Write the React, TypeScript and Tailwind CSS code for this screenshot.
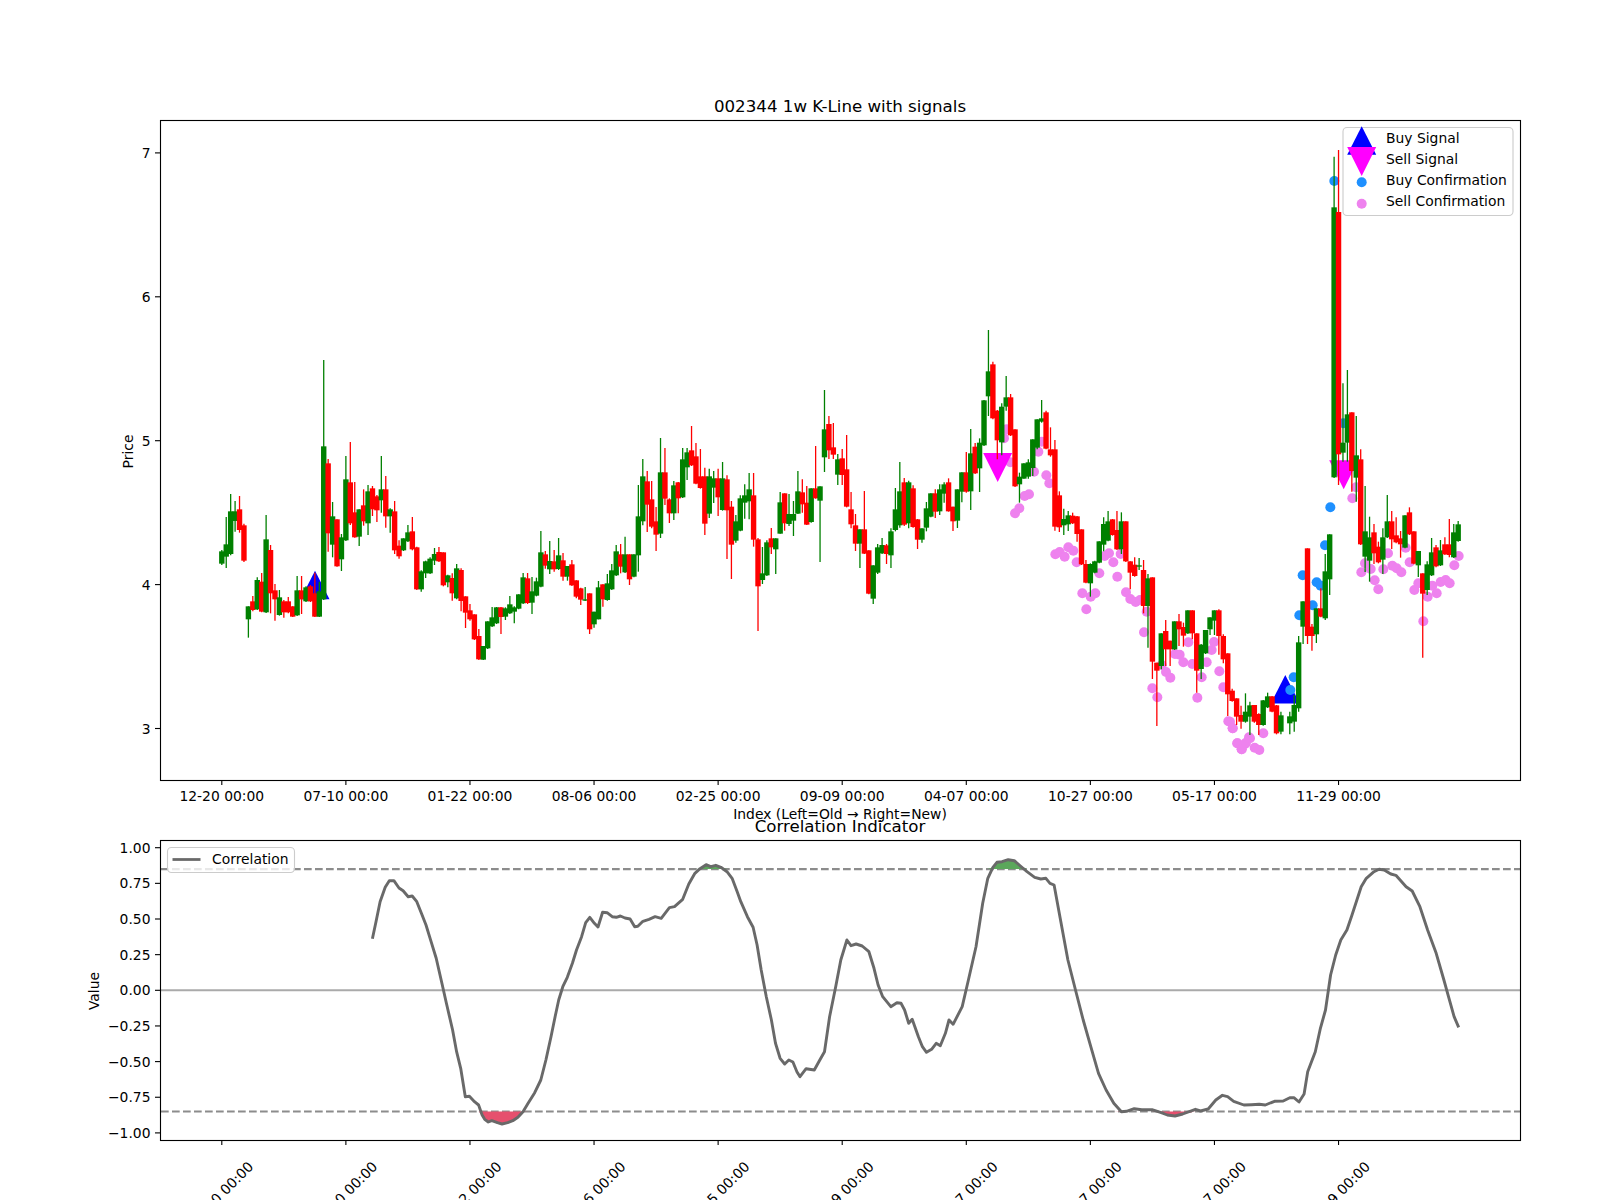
import React from 'react';

// candles: colour letter, then wick high, body top, body bottom, wick low
// y values are in thirds of a pixel from y=350 (read off the chart)
const rows = `g600 604 641 645,g501 583 620 654,g432 484 612 616,g453 484 513 545,r438 478 540 548,r521 526 632 636,
g769 769 808 863,r738 754 780 784,g682 690 778 780,r669 695 785 787,g495 568 787 789,r585 600 730 790,r702 721 748 812,g720 742 795 797,
r750 754 787 803,r741 754 787 790,r769 769 800 801,g678 721 796 798,r678 721 748 792,g709 712 754 756,r705 709 754 756,r668 730 800 801,
g695 724 800 801,g30 289 748 750,r327 340 550 605,g456 499 584 622,r508 508 649 650,g552 562 628 663,g318 388 571 573,r276 397 520 525,
r396 487 562 563,g478 478 560 588,r418 466 514 527,g405 424 520 555,r408 415 478 498,r435 439 481 516,g318 418 451 488,r378 418 499 533,
g475 478 499 548,r453 484 601 612,r571 587 619 626,g565 565 601 603,g525 547 574 576,r501 544 598 601,r590 592 718 720,g661 664 718 725,
g632 634 670 684,g622 626 670 672,g594 612 632 645,r591 606 634 636,r607 607 706 709,g674 676 697 712,r670 684 730 752,g642 655 745 748,
r655 660 753 784,r739 739 788 834,r762 781 808 812,r793 793 868 870,r837 858 928 930,g888 888 929 930,g814 814 895 897,g771 802 829 831,
g771 772 820 822,r771 772 801 852,g772 775 800 810,g738 763 790 792,g769 772 785 820,g733 733 776 778,g669 682 760 762,r669 685 759 762,
g681 724 758 792,g683 694 737 739,g543 607 710 712,r603 613 647 656,g573 633 658 672,r600 634 658 665,g564 616 657 660,r609 631 680 692,
g648 648 680 692,r630 643 706 708,r691 691 740 745,r713 715 749 765,g711 748 752 753,r730 730 838 852,g785 785 823 833,g693 712 808 808,
r703 703 748 770,g672 700 750 752,g642 661 718 720,g585 604 676 678,r582 613 650 670,g560 613 667 669,r613 613 688 705,g613 613 680 682,
g405 499 616 665,g327 379 514 526,r363 394 464 546,r393 448 530 535,r471 514 554 603,g264 367 551 564,r294 367 446 465,r445 448 490 519,
g393 406 490 510,r396 397 445 490,g294 328 442 444,g294 307 352 390,r228 301 346 348,r279 319 401 403,r297 379 414 416,r353 379 521 555,
g356 379 491 504,g363 385 413 459,r356 385 442 498,g336 385 480 482,r376 388 481 627,r453 470 584 687,g495 514 572 578,g436 445 542 544,
g403 436 458 506,g369 418 454 508,r369 436 569 590,r564 568 709 843,g591 670 690 702,g571 577 676 678,r534 565 592 612,g565 565 598 672,
g426 457 551 551,r430 430 520 542,g432 492 522 528,g453 492 512 558,g363 424 491 492,r388 427 463 488,r408 458 524 525,g415 415 516 518,
r288 415 445 446,g409 409 452 636,g120 238 322 366,r198 222 301 327,r219 292 314 327,g312 328 374 405,r297 325 375 405,r255 358 470 472,
r426 478 523 535,r492 526 581 603,g538 538 581 654,r423 538 611 612,r601 601 731 733,g646 646 746 762,g582 592 668 672,g564 585 610 612,
r582 586 612 642,g535 544 616 654,g414 478 540 544,g336 424 526 533,r384 397 524 528,g392 397 520 535,r406 415 531 533,r507 508 569 597,
g535 535 569 578,g456 475 533 544,g430 430 500 502,r418 430 485 504,g403 418 484 495,g397 403 431 458,r385 397 484 485,r470 470 514 543,
g418 418 512 534,g367 367 425 457,r306 367 425 428,g237 310 424 480,r279 290 370 372,g265 278 355 426,g150 151 286 288,g-60 64 139 198,
r35 43 205 208,r180 182 271 328,g160 170 277 316,g78 142 170 182,r132 142 256 258,r238 238 409 411,g368 380 403 458,g340 340 386 386,
g328 337 380 386,g268 268 354 378,g208 208 293 298,g150 205 215 218,r182 187 296 298,r232 298 316 320,r270 298 530 542,r424 436 532 546,
g476 507 526 555,g483 496 523 543,r488 497 520 522,r498 499 552 575,r538 538 643 645,r630 642 698 700,g640 642 700 740,g632 634 668 670,
g574 574 638 640,g502 522 584 604,g483 514 572 574,r507 508 555 557,r483 540 598 600,g487 514 598 612,r514 514 634 636,r634 634 668 718,
r622 644 678 680,g624 646 650 660,r630 660 768 790,g672 685 768 893,r682 682 935 987,r938 938 962 1128,g850 850 948 958,r810 843 898 948,
r872 872 898 948,g814 814 898 900,r792 814 838 888,r818 831 857 890,g781 781 850 852,r781 781 850 868,r850 850 962 1028,g882 884 957 987,
g840 840 910 912,g802 802 838 855,g781 781 812 855,r778 781 858 914,r853 858 928 940,r910 910 1033 1098,r1016 1022 1053 1055,
r1045 1045 1100 1125,r1067 1095 1115 1136,g1030 1085 1115 1118,g1055 1066 1100 1155,r1065 1065 1115 1118,r1090 1092 1125 1155,
g1050 1051 1125 1127,g1028 1039 1072 1074,r1038 1039 1085 1087,r1065 1066 1150 1153,g1085 1096 1145 1153,g1100 1100 1100 1100,
g1085 1099 1120 1153,g1035 1065 1115 1145,g858 877 1075 1085,g754 754 830 882,r595 595 858 882,r822 830 858 902,g775 775 853 879,
r715 775 800 802,g612 664 805 810,g553 553 688 735,g-580 -428 382 384,r-600 -414 313 405,g100 278 308 335,g60 193 278 335,r187 187 363 425,
g198 316 383 455,r298 328 583 585,g408 544 620 666,g500 562 632 695,r522 547 610 642,r575 590 637 640,g535 562 629 672,g435 514 562 564,
r483 514 568 597,r502 556 577 580,r543 565 583 623,g496 496 593 595,r472 487 553 555,r544 544 641 643,g603 603 646 681,r670 670 731 923,
g634 643 720 735,g564 607 676 678,r585 592 649 652,g570 601 646 648,r562 583 613 615,r507 583 615 622,g522 547 622 624,g513 523 573 575`;

const candles = rows.replace(/\s*\n\s*/g, '').split(',').map((r) => {
  const [hi, top, bot, lo] = r.slice(1).split(' ').map(Number);
  return { up: r[0] === 'g', hi: 350 + hi / 3, top: 350 + top / 3, bot: 350 + bot / 3, lo: 350 + lo / 3 };
});

const barX = (i: number) => 221.8 + i * 4.4315;

const tickXs = Array.from({ length: 10 }, (_, k) => barX(k * 28));
const tickDates = ['12-20 00:00', '07-10 00:00', '01-22 00:00', '08-06 00:00', '02-25 00:00', '09-09 00:00', '04-07 00:00', '10-27 00:00', '05-17 00:00', '11-29 00:00'];

const sellDots = [
  ...[[195, 490], [208, 475], [224, 438], [237, 433], [181, 337], [170, 238], [162, 265], [252, 365], [265, 305], [275, 275], [289, 376], [298, 400], [316, 613], [329, 606], [344, 620], [355, 592], [370, 602], [380, 637], [448, 670], [397, 730], [422, 740], [436, 730], [409, 778], [464, 618], [477, 610], [490, 637], [502, 680], [512, 612], [528, 727], [541, 747], [557, 756], [570, 750], [582, 847], [590, 785], [607, 1015], [622, 1042], [635, 945], [648, 966], [661, 983], [675, 912], [689, 914], [700, 937], [715, 877], [727, 942], [742, 1043], [755, 982], [770, 937], [785, 900], [792, 876], [808, 964], [820, 1012], [835, 1114], [848, 1135], [862, 1180], [875, 1198], [885, 1182], [897, 1162]].map(([x, y]) => [950 + x / 3, 350 + y / 3]),
  ...[[0, 965], [8, 985], [22, 1030], [35, 1048], [48, 1028], [60, 1015], [74, 1043], [88, 1050], [100, 1000], [367, 295], [378, 262], [394, 517], [405, 490], [422, 507], [434, 541], [445, 568], [460, 508], [474, 460], [487, 497], [500, 505], [514, 517], [527, 443], [539, 487], [553, 570], [565, 550], [580, 664], [593, 590], [607, 557], [620, 580], [632, 546], [647, 540], [659, 550], [673, 496], [686, 468]].map(([x, y]) => [1230 + x / 3, 400 + y / 3]),
];

const buyDots = [
  ...[[181, 870], [191, 832], [208, 646], [218, 526], [248, 616], [260, 547], [272, 557], [285, 436], [301, 322], [340, 70]].map(([x, y]) => [1230 + x / 3, 400 + y / 3]),
  [1334.3, 181],
];

const corrLeft = [[730, 446], [737, 395], [745, 335], [755, 292], [763, 272], [772, 272], [782, 294], [790, 302], [800, 320], [808, 318], [817, 335], [826, 370], [835, 405], [845, 455], [855, 505], [867, 585], [875, 640], [887, 720], [895, 785], [903, 835], [912, 920], [920, 919], [930, 935], [938, 945], [945, 975], [950, 988], [957, 996], [964, 992], [975, 998], [984, 1002], [995, 998], [1005, 992], [1015, 982], [1025, 965], [1035, 940], [1048, 908], [1060, 870], [1070, 810], [1080, 740], [1088, 680], [1095, 630], [1103, 590], [1112, 562], [1122, 520], [1130, 480], [1140, 440], [1148, 398], [1156, 382], [1165, 400], [1172, 411], [1181, 367], [1190, 368], [1200, 380], [1208, 382], [1216, 378], [1225, 384], [1235, 387], [1244, 410], [1250, 409], [1260, 394], [1272, 388], [1284, 380], [1296, 385], [1312, 353], [1322, 350], [1338, 328], [1350, 282], [1362, 250], [1372, 236], [1384, 224], [1393, 230], [1403, 226], [1413, 232], [1425, 245], [1435, 265], [1445, 305], [1452, 335], [1465, 380], [1476, 412], [1484, 465], [1492, 540], [1502, 620], [1512, 690], [1520, 760], [1529, 805], [1538, 822], [1546, 810], [1554, 816], [1562, 845]];
const corrRight = [[0, 860], [12, 836], [28, 840], [38, 812], [48, 785], [58, 680], [70, 590], [80, 510], [92, 450], [100, 467], [110, 462], [122, 468], [135, 485], [145, 535], [153, 585], [162, 620], [178, 650], [190, 638], [198, 640], [205, 660], [213, 700], [220, 688], [232, 740], [240, 770], [248, 787], [258, 778], [267, 760], [275, 767], [285, 730], [292, 690], [300, 703], [318, 650], [330, 570], [345, 470], [358, 340], [368, 265], [378, 232], [386, 217], [396, 215], [408, 209], [420, 212], [432, 228], [445, 245], [460, 262], [472, 267], [482, 265], [490, 280], [498, 285], [510, 385], [525, 510], [540, 600], [555, 690], [570, 770], [585, 850], [600, 900], [615, 940], [630, 965], [640, 964], [655, 956], [670, 959], [690, 959], [708, 968], [720, 975], [735, 978], [750, 972], [775, 958], [785, 963], [800, 957], [815, 930], [828, 916], [838, 920], [850, 934], [870, 945], [885, 944], [900, 943], [912, 945], [930, 934], [947, 933], [960, 923], [968, 923], [978, 936], [988, 912], [995, 845], [1010, 785], [1020, 715], [1030, 660], [1040, 555], [1050, 495], [1060, 450], [1072, 420], [1082, 375], [1100, 290], [1110, 265], [1125, 245], [1135, 238], [1145, 240], [1158, 252], [1168, 256], [1188, 290], [1200, 303], [1215, 350], [1230, 420], [1247, 490], [1262, 570], [1272, 625], [1282, 680], [1291, 712]];
const corr = [
  ...corrLeft.map(([x, y]) => [x / 1.96, 790 + y / 3]),
  ...corrRight.map(([x, y]) => [800 + x / 1.96, 790 + y / 3]),
];
const corrY = (v: number) => 990.3 - 142.6 * v;
const pts = (list: number[][]) => list.map(([x, y]) => `${x.toFixed(1)},${y.toFixed(1)}`).join(' ');

const Tri = ({ x, y, down, color }: { x: number; y: number; down?: boolean; color: string }) => (
  <polygon fill={color} points={down ? `${x - 14.5},${y} ${x + 14.5},${y} ${x},${y + 29}` : `${x - 14.5},${y} ${x + 14.5},${y} ${x},${y - 28.5}`} />
);

const Frame = ({ top, bottom }: { top: number; bottom: number }) => (
  <rect x={160.5} y={top + 0.5} width={1360} height={bottom - top} fill="none" stroke="#000" strokeWidth={1.11} />
);

const PriceChart = () => (
  <svg viewBox="0 100 1600 720" className="w-[1600px] h-[720px] overflow-visible shrink-0">
    <text x={840} y={112} textAnchor="middle" className="text-[16.67px]">002344 1w K-Line with signals</text>

    {sellDots.map(([x, y], i) => <circle key={i} cx={x} cy={y} r={5} fill="#ee82ee" />)}
    <Tri x={315} y={599.3} color="#0000ff" />
    <Tri x={1285.3} y={703.5} color="#0000ff" />
    <Tri x={997.7} y={453} down color="#ff00ff" />
    <Tri x={1343.7} y={460.3} down color="#ff00ff" />
    {buyDots.map(([x, y], i) => <circle key={i} cx={x} cy={y} r={5} fill="#1e90ff" />)}

    {candles.map((c, i) => {
      const color = c.up ? '#008000' : '#ff0000';
      const x = barX(i);
      return (
        <g key={i}>
          <line x1={x} x2={x} y1={c.hi} y2={c.lo} stroke={color} strokeWidth={1.3} />
          <rect x={x - 2.7} y={c.top} width={5.4} height={c.bot - c.top} fill={color} />
        </g>
      );
    })}

    <Frame top={120} bottom={780} />
    {tickXs.map((x, k) => (
      <g key={k}>
        <line x1={x} x2={x} y1={780} y2={785} stroke="#000" strokeWidth={1.11} />
        <text x={x} y={801} textAnchor="middle" className="text-[13.89px]">{tickDates[k]}</text>
      </g>
    ))}
    {[7, 6, 5, 4, 3].map((v) => {
      const y = 584.6 - 143.9 * (v - 4);
      return (
        <g key={v}>
          <line x1={155} x2={160} y1={y} y2={y} stroke="#000" strokeWidth={1.11} />
          <text x={150.5} y={y + 5} textAnchor="end" className="text-[13.89px]">{v}</text>
        </g>
      );
    })}
    <text x={840} y={819} textAnchor="middle" className="text-[13.89px]">{'Index (Left=Old → Right=New)'}</text>
    <text transform="translate(132.5 451.5) rotate(-90)" textAnchor="middle" className="text-[13.89px]">Price</text>

    <rect x={1343} y={127.5} width={170} height={88} rx={4} fill="#ffffff" fillOpacity={0.8} stroke="#cccccc" strokeWidth={1.11} />
    <Tri x={1361.7} y={154.7} color="#0000ff" />
    <Tri x={1361.7} y={147} down color="#ff00ff" />
    <circle cx={1361.7} cy={182.3} r={5} fill="#1e90ff" />
    <circle cx={1361.7} cy={203.7} r={5} fill="#ee82ee" />
    {['Buy Signal', 'Sell Signal', 'Buy Confirmation', 'Sell Confirmation'].map((t, k) => (
      <text key={t} x={1386} y={143 + k * 21} className="text-[13.89px]">{t}</text>
    ))}
  </svg>
);

const CorrelationChart = () => (
  <svg viewBox="0 820 1600 380" className="w-[1600px] h-[380px] overflow-visible shrink-0">
    <text x={840} y={831.5} textAnchor="middle" className="text-[16.67px]">Correlation Indicator</text>

    <line x1={161} x2={1520} y1={corrY(0)} y2={corrY(0)} stroke="#aaaaaa" strokeWidth={2.08} />
    <line x1={161} x2={1520} y1={corrY(0.85)} y2={corrY(0.85)} stroke="#8c8c8c" strokeWidth={2.08} strokeDasharray="7.7 3.3" />
    <line x1={161} x2={1520} y1={corrY(-0.85)} y2={corrY(-0.85)} stroke="#8c8c8c" strokeWidth={2.08} strokeDasharray="7.7 3.3" />
    <polygon points={pts(corr.map(([x, y]) => [x, Math.min(y, corrY(0.85))]))} fill="#5ba75b" />
    <polygon points={pts(corr.map(([x, y]) => [x, Math.max(y, corrY(-0.85))]))} fill="#e6506e" />
    <polyline points={pts(corr)} fill="none" stroke="#696969" strokeWidth={2.9} strokeLinejoin="round" />

    <Frame top={840} bottom={1140} />
    {tickXs.map((x, k) => (
      <g key={k}>
        <line x1={x} x2={x} y1={1140} y2={1145} stroke="#000" strokeWidth={1.11} />
        <text transform={`translate(${x - 1} 1194) rotate(-45)`} y={5} textAnchor="middle" className="text-[13.89px]">{tickDates[k]}</text>
      </g>
    ))}
    {[1, 0.75, 0.5, 0.25, 0, -0.25, -0.5, -0.75, -1].map((v) => {
      const y = corrY(v);
      return (
        <g key={v}>
          <line x1={155} x2={160} y1={y} y2={y} stroke="#000" strokeWidth={1.11} />
          <text x={150.5} y={y + 5} textAnchor="end" className="text-[13.89px]">{v < 0 ? `−${Math.abs(v).toFixed(2)}` : v.toFixed(2)}</text>
        </g>
      );
    })}
    <text transform="translate(98.5 991) rotate(-90)" textAnchor="middle" className="text-[13.89px]">Value</text>

    <rect x={167.5} y={847.5} width={127} height={25} rx={4} fill="#ffffff" fillOpacity={0.8} stroke="#cccccc" strokeWidth={1.11} />
    <line x1={172.5} x2={200.5} y1={859.5} y2={859.5} stroke="#696969" strokeWidth={2.78} />
    <text x={212} y={864} className="text-[13.89px]">Correlation</text>
  </svg>
);

export default function App() {
  return (
    <div className="w-[1600px] h-[1200px] overflow-hidden bg-white pt-[100px] flex flex-col font-['DejaVu_Sans',sans-serif] text-black">
      <PriceChart />
      <CorrelationChart />
    </div>
  );
}
